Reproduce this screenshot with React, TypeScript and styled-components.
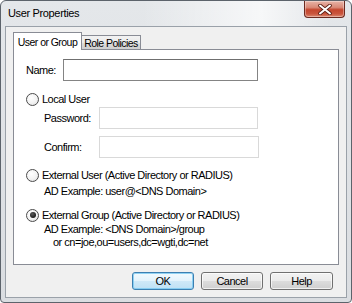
import React from 'react';
import styled, { createGlobalStyle } from 'styled-components';

const Global = createGlobalStyle`
  html, body { margin: 0; padding: 0; background: #ffffff; }
  body {
    font-family: "Liberation Sans", Arial, sans-serif;
    font-size: 11px;
    letter-spacing: -0.5px;
    color: #000;
  }
  * { box-sizing: border-box; }
`;

const Window = styled.div`
  width: 352px;
  height: 303px;
  border: 1px solid #5c636b;
  border-radius: 6px 6px 4px 4px;
  background: linear-gradient(to bottom, #e4e7ea 0%, #dadde1 100%);
  display: flex;
  flex-direction: column;
  padding: 0 4px 4px 4px;
  overflow: hidden;
`;

const TitleBar = styled.div`
  height: 25px;
  display: flex;
  align-items: flex-start;
  background: linear-gradient(to right, rgba(255,255,255,0) 40%, rgba(255,255,255,0.7) 75%, rgba(255,255,255,0) 95%);
`;

const Title = styled.div`
  line-height: 25px;
  padding-left: 3px;
  font-size: 11px;
  letter-spacing: -0.35px;
  color: #000;
`;

const CloseButton = styled.div`
  margin-left: auto;
  margin-right: 2px;
  width: 41px;
  height: 17px;
  border: 1px solid #6b2a20;
  border-top: none;
  border-radius: 0 0 4px 4px;
  background: linear-gradient(to bottom, #e8b4a8 0%, #d98a78 40%, #c4462e 55%, #c9553d 80%, #dc8a72 100%);
  box-shadow: inset 0 0 0 1px rgba(255, 255, 255, 0.35);
  display: flex;
  align-items: center;
  justify-content: center;
`;

const Client = styled.div`
  flex: 1;
  border: 1px solid #9aa1a9;
  background: #f0f0f0;
  padding: 5px 7px 0 7px;
  display: flex;
  flex-direction: column;
`;

const TabStrip = styled.div`
  display: flex;
  align-items: flex-end;
  height: 17px;
`;

const Tab = styled.div<{ $active?: boolean }>`
  position: relative;
  z-index: ${(p) => (p.$active ? 2 : 1)};
  height: ${(p) => (p.$active ? 18 : 14)}px;
  width: ${(p) => (p.$active ? 69 : 60)}px;
  margin-bottom: ${(p) => (p.$active ? -1 : 0)}px;
  margin-left: ${(p) => (p.$active ? 0 : -1)}px;
  border: 1px solid #898c95;
  border-bottom: none;
  background: ${(p) =>
    p.$active ? '#ffffff' : 'linear-gradient(to bottom, #f2f2f2 0%, #ebebeb 50%, #dddddd 51%, #cfcfcf 100%)'};
  display: flex;
  align-items: center;
  justify-content: center;
  padding-top: ${(p) => (p.$active ? 0 : 1)}px;
  line-height: 12px;
  font-size: 10.5px;
  letter-spacing: -0.55px;
`;

const Panel = styled.div`
  height: 216px;
  border: 1px solid #898c95;
  background: #ffffff;
  padding: 9px 0 0 12px;
  display: flex;
  flex-direction: column;
`;

const Row = styled.div<{ $mt?: number; $indent?: number }>`
  display: flex;
  align-items: center;
  height: 22px;
  margin-top: ${(p) => p.$mt ?? 0}px;
  padding-left: ${(p) => p.$indent ?? 0}px;
`;

const Label = styled.div<{ $w: number }>`
  width: ${(p) => p.$w}px;
  flex: none;
`;

const TextBox = styled.div<{ $w: number; $disabled?: boolean }>`
  width: ${(p) => p.$w}px;
  height: 22px;
  background: #fff;
  border: 1px solid ${(p) => (p.$disabled ? '#d9d9d9' : '#848484')};
  ${(p) => (p.$disabled ? '' : 'border-top-color: #6f6f6f;')}
`;

const RadioRow = styled.div<{ $mt?: number }>`
  display: flex;
  align-items: center;
  gap: 3px;
  height: 14px;
  margin-top: ${(p) => p.$mt ?? 0}px;
`;

const RadioCircle = styled.div<{ $checked?: boolean }>`
  position: relative;
  width: 13px;
  height: 13px;
  border-radius: 50%;
  border: 1px solid #4b4b4b;
  background: radial-gradient(circle at 40% 35%, #ffffff 0%, #f2f2f2 55%, #d8d8d8 100%);
  flex: none;
  &::after {
    content: '';
    display: ${(p) => (p.$checked ? 'block' : 'none')};
    position: absolute;
    left: 2.5px;
    top: 2.5px;
    width: 6px;
    height: 6px;
    border-radius: 50%;
    background: radial-gradient(circle at 40% 35%, #5a5a5a 0%, #1c1c1c 70%);
  }
`;

const Note = styled.div<{ $mt?: number; $indent?: number; $lh?: number }>`
  margin-top: ${(p) => p.$mt ?? 0}px;
  padding-left: ${(p) => p.$indent ?? 18}px;
  line-height: ${(p) => p.$lh ?? 14}px;
`;

const SubLine = styled.div`
  padding-left: 9px;
`;

const ButtonRow = styled.div`
  display: flex;
  justify-content: flex-end;
  gap: 7px;
  padding: 7px 6px 0 0;
`;

const Button = styled.div<{ $default?: boolean; $w: number }>`
  width: ${(p) => p.$w}px;
  height: 18px;
  border-radius: 3px;
  border: 1px solid ${(p) => (p.$default ? '#3c7fb1' : '#707070')};
  background: ${(p) =>
    p.$default
      ? 'linear-gradient(to bottom, #f2fafe 0%, #e3f3fc 50%, #cfe9f8 51%, #bfe1f5 100%)'
      : 'linear-gradient(to bottom, #f2f2f2 0%, #ebebeb 50%, #dddddd 51%, #cfcfcf 100%)'};
  box-shadow: inset 0 0 0 1px ${(p) => (p.$default ? 'rgba(120, 200, 240, 0.8)' : 'rgba(255,255,255,0.7)')};
  display: flex;
  align-items: center;
  justify-content: center;
  line-height: 12px;
`;

function CloseGlyph() {
  return (
    <svg width="14" height="11" viewBox="0 0 14 11">
      <path d="M2 1.5 L12 9.5 M12 1.5 L2 9.5" stroke="#5a1e14" strokeWidth="3.6" strokeLinecap="round" />
      <path d="M2 1.5 L12 9.5 M12 1.5 L2 9.5" stroke="#ffffff" strokeWidth="2" strokeLinecap="round" />
    </svg>
  );
}

export default function App() {
  return (
    <>
      <Global />
      <Window>
        <TitleBar>
          <Title>User Properties</Title>
          <CloseButton>
            <CloseGlyph />
          </CloseButton>
        </TitleBar>
        <Client>
          <TabStrip>
            <Tab $active>User or Group</Tab>
            <Tab>Role Policies</Tab>
          </TabStrip>
          <Panel>
            <Row>
              <Label $w={37}>Name:</Label>
              <TextBox $w={195} />
            </Row>
            <RadioRow $mt={11}>
              <RadioCircle />
              <span>Local User</span>
            </RadioRow>
            <Row $mt={1} $indent={18}>
              <Label $w={55}>Password:</Label>
              <TextBox $w={159} $disabled />
            </Row>
            <Row $mt={7} $indent={18}>
              <Label $w={55}>Confirm:</Label>
              <TextBox $w={160} $disabled />
            </Row>
            <RadioRow $mt={10}>
              <RadioCircle />
              <span>External User (Active Directory or RADIUS)</span>
            </RadioRow>
            <Note $mt={2}>AD Example: user@&lt;DNS Domain&gt;</Note>
            <RadioRow $mt={10}>
              <RadioCircle $checked />
              <span>External Group (Active Directory or RADIUS)</span>
            </RadioRow>
            <Note $mt={1} $lh={13}>
              <div>AD Example: &lt;DNS Domain&gt;/group</div>
              <SubLine>or cn=joe,ou=users,dc=wgti,dc=net</SubLine>
            </Note>
          </Panel>
          <ButtonRow>
            <Button $default $w={62}>OK</Button>
            <Button $w={62}>Cancel</Button>
            <Button $w={63}>Help</Button>
          </ButtonRow>
        </Client>
      </Window>
    </>
  );
}
